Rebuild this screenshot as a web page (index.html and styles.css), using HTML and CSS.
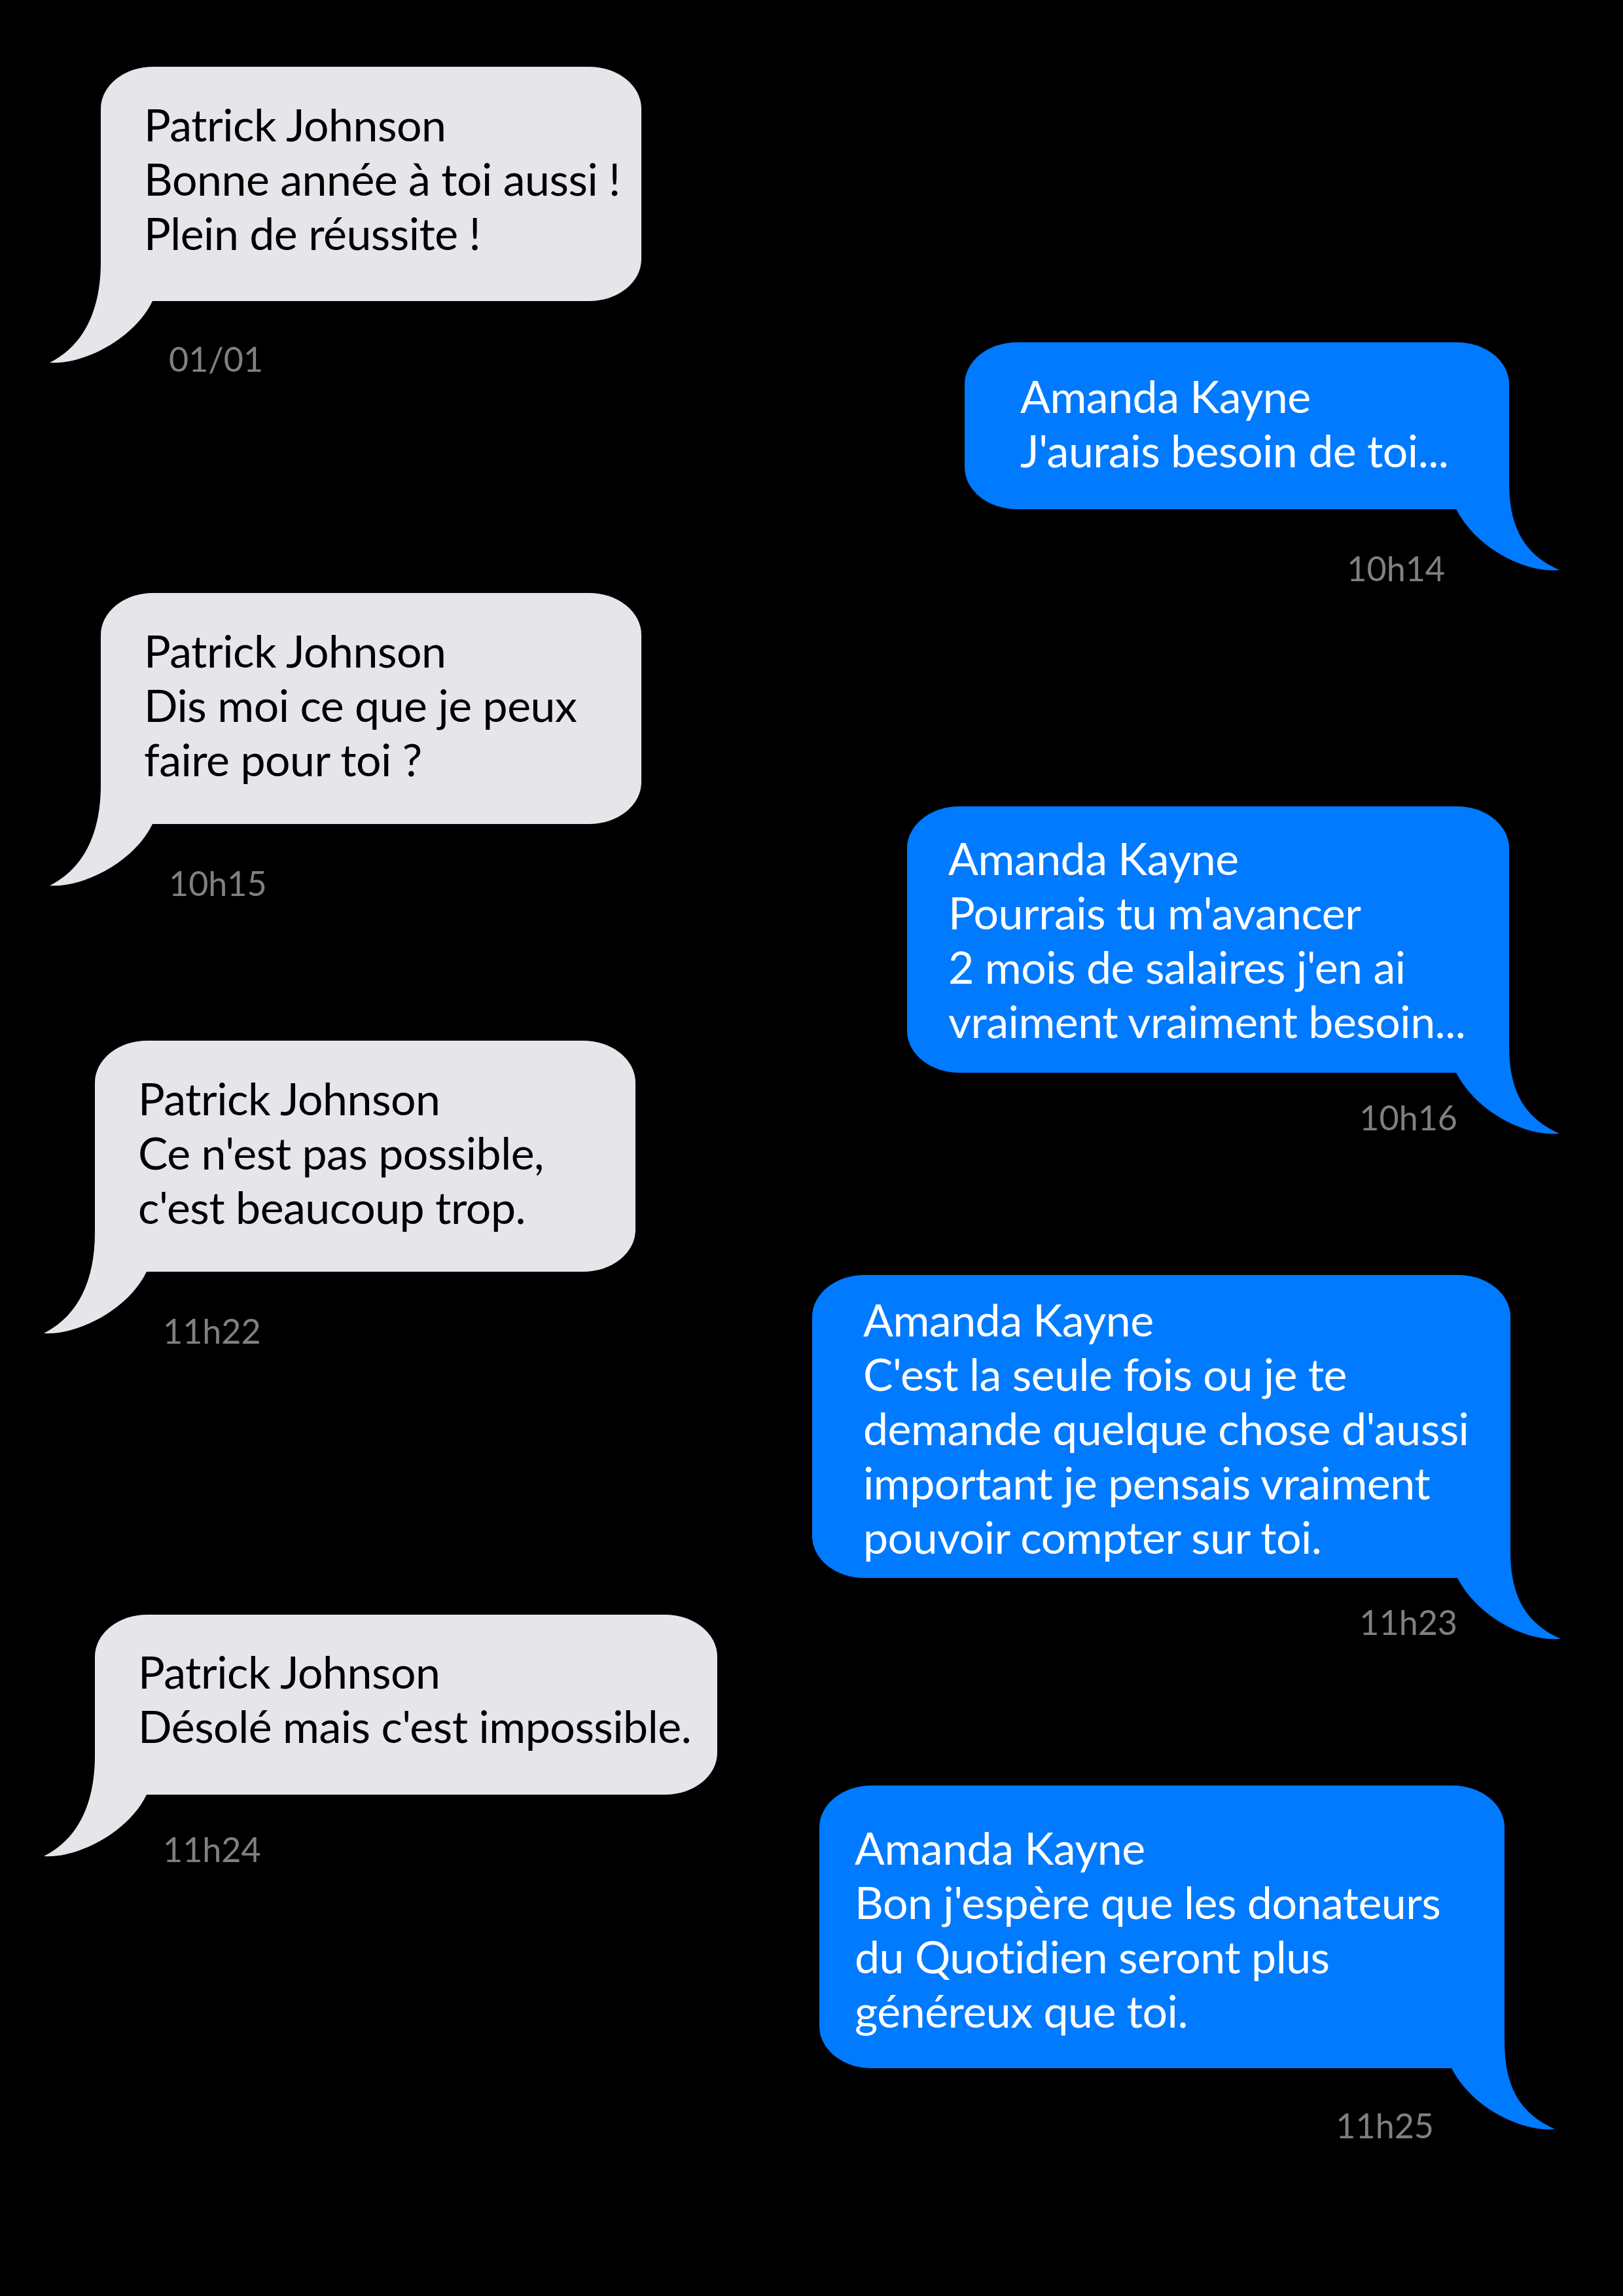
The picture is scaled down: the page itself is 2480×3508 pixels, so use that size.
FILE: index.html
```html
<!DOCTYPE html>
<html lang="fr">
<head>
    <meta charset="UTF-8">
    <title>Conversation</title>
    <link rel="stylesheet" href="styles.css">
</head>
<body>
    <div class="thread">
        <!-- Messages reçus -->
        <div class="col col-left">
            <div class="msg msg-in p1">
                <div class="bubble">
                    Patrick Johnson<br>Bonne année à toi aussi !<br>Plein de réussite !
                    <svg class="tail" viewBox="-90 -70 180 170"><path d="M0,-60 C0,20 -30,70 -78,94 C-30,98 50,60 79,0 L79,-60 Z"/></svg>
                </div>
                <div class="time">01/01</div>
            </div>
            <div class="msg msg-in p2">
                <div class="bubble">
                    Patrick Johnson<br>Dis moi ce que je peux<br>faire pour toi ?
                    <svg class="tail" viewBox="-90 -70 180 170"><path d="M0,-60 C0,20 -30,70 -78,94 C-30,98 50,60 79,0 L79,-60 Z"/></svg>
                </div>
                <div class="time">10h15</div>
            </div>
            <div class="msg msg-in p3">
                <div class="bubble">
                    Patrick Johnson<br>Ce n'est pas possible,<br>c'est beaucoup trop.
                    <svg class="tail" viewBox="-90 -70 180 170"><path d="M0,-60 C0,20 -30,70 -78,94 C-30,98 50,60 79,0 L79,-60 Z"/></svg>
                </div>
                <div class="time">11h22</div>
            </div>
            <div class="msg msg-in p4">
                <div class="bubble">
                    Patrick Johnson<br>Désolé mais c'est impossible.
                    <svg class="tail" viewBox="-90 -70 180 170"><path d="M0,-60 C0,20 -30,70 -78,94 C-30,98 50,60 79,0 L79,-60 Z"/></svg>
                </div>
                <div class="time">11h24</div>
            </div>
        </div>

        <!-- Messages envoyés -->
        <div class="col col-right">
            <div class="msg msg-out a1">
                <div class="bubble">
                    Amanda Kayne<br>J'aurais besoin de toi...
                    <svg class="tail" viewBox="-90 -70 180 170"><path d="M0,-40 C0,30 25,70 77,93 C25,98 -50,60 -81,0 L-81,-40 Z"/></svg>
                </div>
                <div class="time">10h14</div>
            </div>
            <div class="msg msg-out a2">
                <div class="bubble">
                    Amanda Kayne<br>Pourrais tu m'avancer<br>2 mois de salaires j'en ai<br>vraiment vraiment besoin...
                    <svg class="tail" viewBox="-90 -70 180 170"><path d="M0,-40 C0,30 25,70 77,93 C25,98 -50,60 -81,0 L-81,-40 Z"/></svg>
                </div>
                <div class="time">10h16</div>
            </div>
            <div class="msg msg-out a3">
                <div class="bubble">
                    Amanda Kayne<br>C'est la seule fois ou je te<br>demande quelque chose d'aussi<br>important je pensais vraiment<br>pouvoir compter sur toi.
                    <svg class="tail" viewBox="-90 -70 180 170"><path d="M0,-40 C0,30 25,70 77,93 C25,98 -50,60 -81,0 L-81,-40 Z"/></svg>
                </div>
                <div class="time">11h23</div>
            </div>
            <div class="msg msg-out a4">
                <div class="bubble">
                    Amanda Kayne<br>Bon j'espère que les donateurs<br>du Quotidien seront plus<br>généreux que toi.
                    <svg class="tail" viewBox="-90 -70 180 170"><path d="M0,-40 C0,30 25,70 77,93 C25,98 -50,60 -81,0 L-81,-40 Z"/></svg>
                </div>
                <div class="time">11h25</div>
            </div>
        </div>
    </div>
</body>
</html>
```

FILE: styles.css
```css
* {
    box-sizing: border-box;
}

body {
    margin: 0;
    background: #000;
    font-family: Lato, "Open Sans", sans-serif;
    font-variant-ligatures: none;
}

.thread {
    width: 2480px;
    height: 3508px;
    display: flex;
}

.col {
    display: flex;
    flex-direction: column;
}

.col-left {
    width: 1240px;
}

.col-right {
    flex: 1;
    align-items: flex-end;
}

.msg {
    display: flex;
    flex-direction: column;
}

.msg-out {
    align-items: flex-end;
}

.bubble {
    position: relative;
    font-size: 68px;
    line-height: 83px;
    letter-spacing: -0.5px;
    white-space: nowrap;
}

.msg-in .bubble {
    background: #e5e5ea;
    color: #000;
    border-radius: 80px 80px 80px 0 / 64px 64px 64px 0;
}

.msg-out .bubble {
    background: #007aff;
    color: #fff;
    border-radius: 80px 80px 0 80px / 64px 64px 0 64px;
}

.tail {
    position: absolute;
    bottom: -100px;
    width: 180px;
    height: 170px;
}

.msg-in .tail {
    left: -90px;
    fill: #e5e5ea;
}

.msg-out .tail {
    right: -90px;
    fill: #007aff;
}

.time {
    height: 150px;
    font-size: 52px;
    line-height: 60px;
    color: #808080;
}

/* Patrick */
.p1 { margin: 102px 0 0 154px; }
.p1 .bubble { width: 826px; height: 358px; padding: 46px 0 0 66px; }
.p1 .time { padding: 58px 0 0 104px; }

.p2 { margin: 296px 0 0 154px; }
.p2 .bubble { width: 826px; height: 353px; padding: 46px 0 0 66px; }
.p2 .time { padding: 60px 0 0 104px; }

.p3 { margin: 181px 0 0 145px; }
.p3 .bubble { width: 826px; height: 353px; padding: 46px 0 0 66px; }
.p3 .time { padding: 60px 0 0 104px; }

.p4 { margin: 374px 0 0 145px; }
.p4 .bubble { width: 951px; height: 275px; padding: 45px 0 0 66px; }
.p4 .time { padding: 53px 0 0 104px; }

/* Amanda */
.a1 { margin: 523px 174px 0 0; }
.a1 .bubble { width: 832px; height: 255px; padding: 40px 0 0 85px; }
.a1 .time { padding: 60px 98px 0 0; }

.a2 { margin: 304px 174px 0 0; }
.a2 .bubble { width: 920px; height: 407px; padding: 37px 0 0 63px; }
.a2 .time { padding: 38px 79px 0 0; }

.a3 { margin: 159px 172px 0 0; }
.a3 .bubble { width: 1067px; height: 463px; padding: 26px 0 0 78px; }
.a3 .time { padding: 37px 81px 0 0; }

.a4 { margin: 167px 181px 0 0; }
.a4 .bubble { width: 1047px; height: 432px; padding: 53px 0 0 54px; }
.a4 .time { padding: 57px 108px 0 0; }
```
